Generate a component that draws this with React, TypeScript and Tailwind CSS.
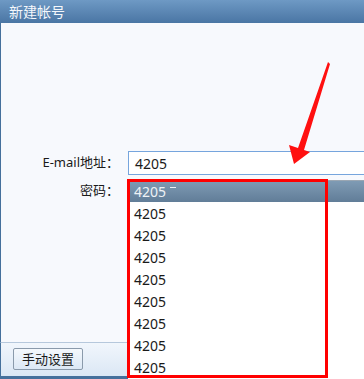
import React from 'react';

const font = "font-['Noto_Sans','Noto_Sans_CJK_SC',sans-serif]";

const NewAccount: React.FC = () => {
    const items = ['4205', '4205', '4205', '4205', '4205', '4205', '4205', '4205'];

    return (
        <div className={`relative w-[364px] h-[379px] overflow-hidden flex flex-col bg-[#f7f9fd] text-[13px] text-[#1a1a1a] ${font}`}>
            {/* title bar */}
            <div className="h-[23px] shrink-0 flex items-center pl-[9px] text-[#f4f7fb] text-[14px] bg-gradient-to-b from-[#6e99c4] to-[#4a76a4]">
                新建帐号
            </div>

            {/* form body */}
            <div className="flex-1 flex flex-col border-l border-[#45709c] pt-[128px]">
                <div className="flex items-center h-[24px]">
                    <span className="w-[122px] text-right pr-[4px]">E-mail地址：</span>
                    <div className="ml-[5px] flex-1 h-[24px] bg-white border border-[#76a5dd] border-r-0 flex items-center pl-[6px] text-[14px]">
                        4205
                    </div>
                </div>
                <div className="flex items-center h-[24px] mt-[4px]">
                    <span className="w-[122px] text-right pr-[4px]">密码：</span>
                </div>
            </div>

            {/* bottom bar */}
            <div className="h-[37px] shrink-0 flex flex-col border-l border-[#45709c] border-t border-t-[#b6c8dc] bg-gradient-to-b from-[#f1f6fc] to-[#d9e6f4]">
                <div className="flex-1 pl-[12px] pt-[5px]">
                    <button className="w-[70px] h-[22px] border border-[#8a9aab] rounded-[2px] bg-gradient-to-b from-[#f4f8fc] to-[#dce8f5] text-[13px] leading-none">
                        手动设置
                    </button>
                </div>
                <div className="h-[3px] bg-[#45709c]" />
            </div>

            {/* dropdown list */}
            <div className="absolute left-[128px] top-[180px] right-0 bottom-0 bg-white text-[14px]">
                <div className="h-[22px] flex items-center pl-[6px] text-[#eef2f6] border-t border-[#9aa6b2] bg-gradient-to-b from-[#7f9bb4] to-[#617d98]">
                    4205
                    <span className="ml-[4px] self-start mt-[6px] w-[6px] h-[1px] bg-[#eef2f6]" />
                </div>
                {items.map((t, i) => (
                    <div key={i} className="h-[22px] flex items-center pl-[6px]">
                        {t}
                    </div>
                ))}
            </div>

            {/* red highlight box */}
            <div className="absolute left-[127px] top-[179px] w-[201px] h-[199px] border-[3px] border-[#ff0000]" />

            {/* red arrow */}
            <svg className="absolute left-0 top-0" width="364" height="379" viewBox="0 0 364 379">
                <polygon points="294,164 289,145 298,148 328,62 330,64 304,150 310,152" fill="#ff1010" />
            </svg>
        </div>
    );
};

export default NewAccount;
